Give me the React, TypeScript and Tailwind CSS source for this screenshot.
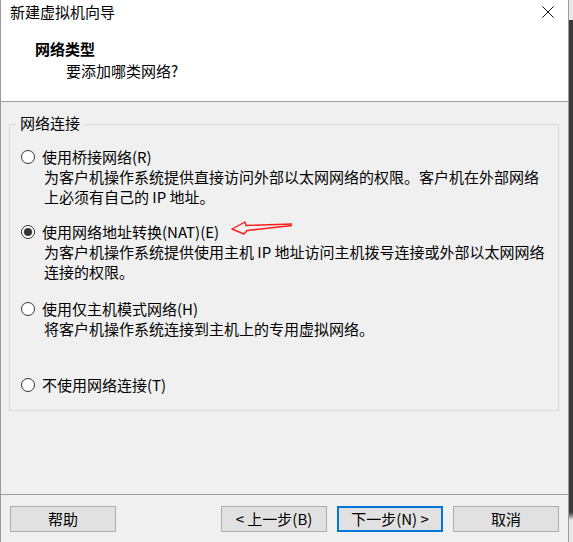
import React from "react";

const font = { fontFamily: '"Noto Sans CJK SC", "Noto Sans", sans-serif' };

function Radio({ checked }: { checked?: boolean }) {
  return (
    <span className="w-[14px] h-[14px] rounded-full border border-[#333333] bg-white flex items-center justify-center shrink-0">
      {checked && <span className="w-[8px] h-[8px] rounded-full bg-[#333333]" />}
    </span>
  );
}

function Option({
  label,
  desc,
  checked,
  className,
}: {
  label: string;
  desc?: string[];
  checked?: boolean;
  className?: string;
}) {
  return (
    <div className={className}>
      <div className="flex items-center h-[20px] pl-[20px] gap-[7px]">
        <Radio checked={checked} />
        <span>{label}</span>
      </div>
      {desc &&
        desc.map((d, i) => (
          <div key={i} className="h-[20px] leading-[20px] pl-[43px] whitespace-nowrap">
            {d}
          </div>
        ))}
    </div>
  );
}

function Btn({ children, primary }: { children: React.ReactNode; primary?: boolean }) {
  return (
    <div
      className={
        "h-[26px] w-[106px] flex items-center justify-center bg-[#e1e1e1] " +
        (primary ? "border-2 border-[#0078d7]" : "border border-[#adadad]")
      }
    >
      {children}
    </div>
  );
}

export default function App() {
  return (
    <div className="w-[573px] h-[542px] flex text-[15px] text-black leading-[20px] overflow-hidden" style={font}>
      <div className="w-[569px] h-full flex flex-col border-l border-r border-[#9a9a9a] bg-[#f0f0f0]">
        {/* header */}
        <div className="h-[102px] bg-white border-b border-[#a0a0a0] shrink-0">
          <div className="h-[24px] flex items-center justify-between pl-[9px] pr-[14px]">
            <span>新建虚拟机向导</span>
            <svg width="12" height="12" viewBox="0 0 12 12">
              <path d="M0.5 0.5 L11.5 11.5 M11.5 0.5 L0.5 11.5" stroke="#111" strokeWidth="1" />
            </svg>
          </div>
          <div className="pt-[15px] pl-[34px] h-[35px] font-bold">网络类型</div>
          <div className="mt-[2px] pl-[65px] h-[20px]">要添加哪类网络?</div>
        </div>

        {/* body */}
        <div className="flex-1 flex flex-col">
          <div className="relative mt-[22px] ml-[8px] mr-[9px] h-[287px] border border-[#d9d9d9]">
            <span className="absolute left-[6px] top-[-12px] px-[4px] bg-[#f0f0f0]">网络连接</span>
            <div className="pt-[22px] relative">
              <Option
                label="使用桥接网络(R)"
                desc={["为客户机操作系统提供直接访问外部以太网网络的权限。客户机在外部网络", "上必须有自己的 IP 地址。"]}
                className="-ml-[9px]"
              />
              <Option
                checked
                label="使用网络地址转换(NAT)(E)"
                desc={["为客户机操作系统提供使用主机 IP 地址访问主机拨号连接或外部以太网网络", "连接的权限。"]}
                className="-ml-[9px] mt-[15px]"
              />
              <Option
                label="使用仅主机模式网络(H)"
                desc={["将客户机操作系统连接到主机上的专用虚拟网络。"]}
                className="-ml-[9px] mt-[17px]"
              />
              <Option label="不使用网络连接(T)" className="-ml-[9px] mt-[36px]" />
              <svg
                className="absolute left-[221px] top-[96px]"
                width="64"
                height="18"
                viewBox="0 0 64 18"
              >
                <path
                  d="M61 3 L15 4.5 L14 1 L1 8 L13 13 L16 9.5 L61 4.5"
                  fill="none"
                  stroke="#ff1a1a"
                  strokeWidth="1.4"
                  strokeLinejoin="round"
                />
              </svg>
            </div>
          </div>
          <div className="flex-1" />
          <div className="h-[1px] bg-[#a0a0a0]" />
          <div className="flex items-center pt-[11px] pb-[10px] pl-[9px] pr-[9px]">
            <Btn>帮助</Btn>
            <div className="flex-1" />
            <div className="flex gap-[10px]">
              <Btn>&lt;&nbsp;上一步(B)</Btn>
              <Btn primary>下一步(N)&nbsp;&gt;</Btn>
              <Btn>取消</Btn>
            </div>
          </div>
        </div>
      </div>
      <div className="w-[4px] h-full flex flex-col">
        <div className="h-[20px] bg-[#e8e8e8]" />
        <div className="flex-1 bg-[#3a3a3a]" />
        <div className="h-[8px] bg-gradient-to-b from-[#3a3a3a] to-[#e8e8e8]" />
        <div className="h-[22px] bg-[#e8e8e8]" />
      </div>
    </div>
  );
}
